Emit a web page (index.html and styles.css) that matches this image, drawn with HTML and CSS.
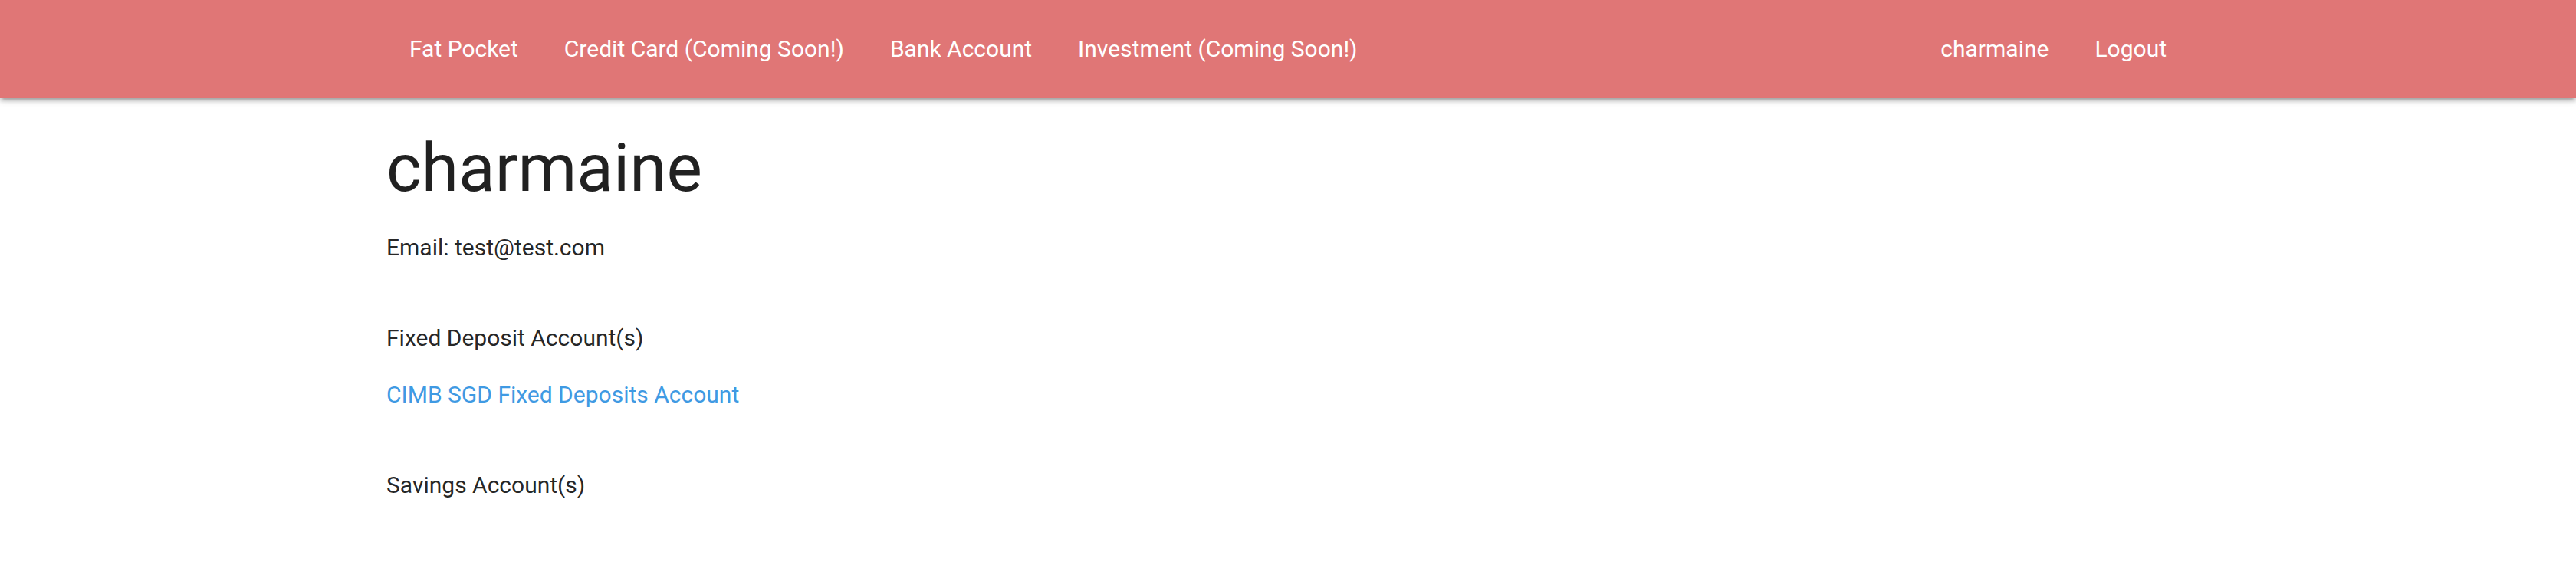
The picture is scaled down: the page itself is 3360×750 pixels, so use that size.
FILE: index.html
```html
<!DOCTYPE html>
<html>
<head>
<meta charset="utf-8">
<link rel="stylesheet" href="styles.css">
</head>
<body>
<nav class="nav">
  <div class="nav-wrapper">
    <ul class="nav-list">
      <li><a href="#">Fat Pocket</a></li>
      <li><a href="#">Credit Card (Coming Soon!)</a></li>
      <li><a href="#">Bank Account</a></li>
      <li><a href="#">Investment (Coming Soon!)</a></li>
    </ul>
    <ul class="nav-list">
      <li><a href="#">charmaine</a></li>
      <li><a href="#">Logout</a></li>
    </ul>
  </div>
</nav>
<main class="container">
  <h3 class="title">charmaine</h3>
  <p class="line">Email: test@test.com</p>
  <p class="line section">Fixed Deposit Account(s)</p>
  <p class="line"><a class="link" href="#">CIMB SGD Fixed Deposits Account</a></p>
  <p class="line section">Savings Account(s)</p>
</main>
</body>
</html>
```
FILE: styles.css
```css
html, body {
  margin: 0;
  padding: 0;
}
body {
  font-family: Roboto, "Liberation Sans", sans-serif;
  font-size: 30px;
  line-height: 1.5;
  color: rgba(0, 0, 0, 0.87);
  background: #ffffff;
}
.nav {
  height: 128px;
  background: #e07676;
  box-shadow: 0 4px 4px 0 rgba(0,0,0,0.14), 0 6px 2px -4px rgba(0,0,0,0.12), 0 2px 10px 0 rgba(0,0,0,0.2);
}
.nav-wrapper {
  width: 70%;
  margin: 0 auto;
  height: 128px;
  display: flex;
  justify-content: space-between;
}
.nav-list {
  list-style: none;
  margin: 0;
  padding: 0;
  display: flex;
}
.nav-list a {
  display: block;
  padding: 0 30px;
  line-height: 128px;
  color: #ffffff;
  text-decoration: none;
  font-size: 30px;
}
.container {
  width: 70%;
  margin: 0 auto;
}
.title {
  font-size: 87.6px;
  font-weight: 400;
  line-height: 110%;
  margin: 43px 0 33px;
}
.line {
  margin: 0;
}
.line + .line {
  margin-top: 29px;
}
.line.section {
  margin-top: 73px;
}
.link {
  color: #3f9ae3;
  text-decoration: none;
}
```
